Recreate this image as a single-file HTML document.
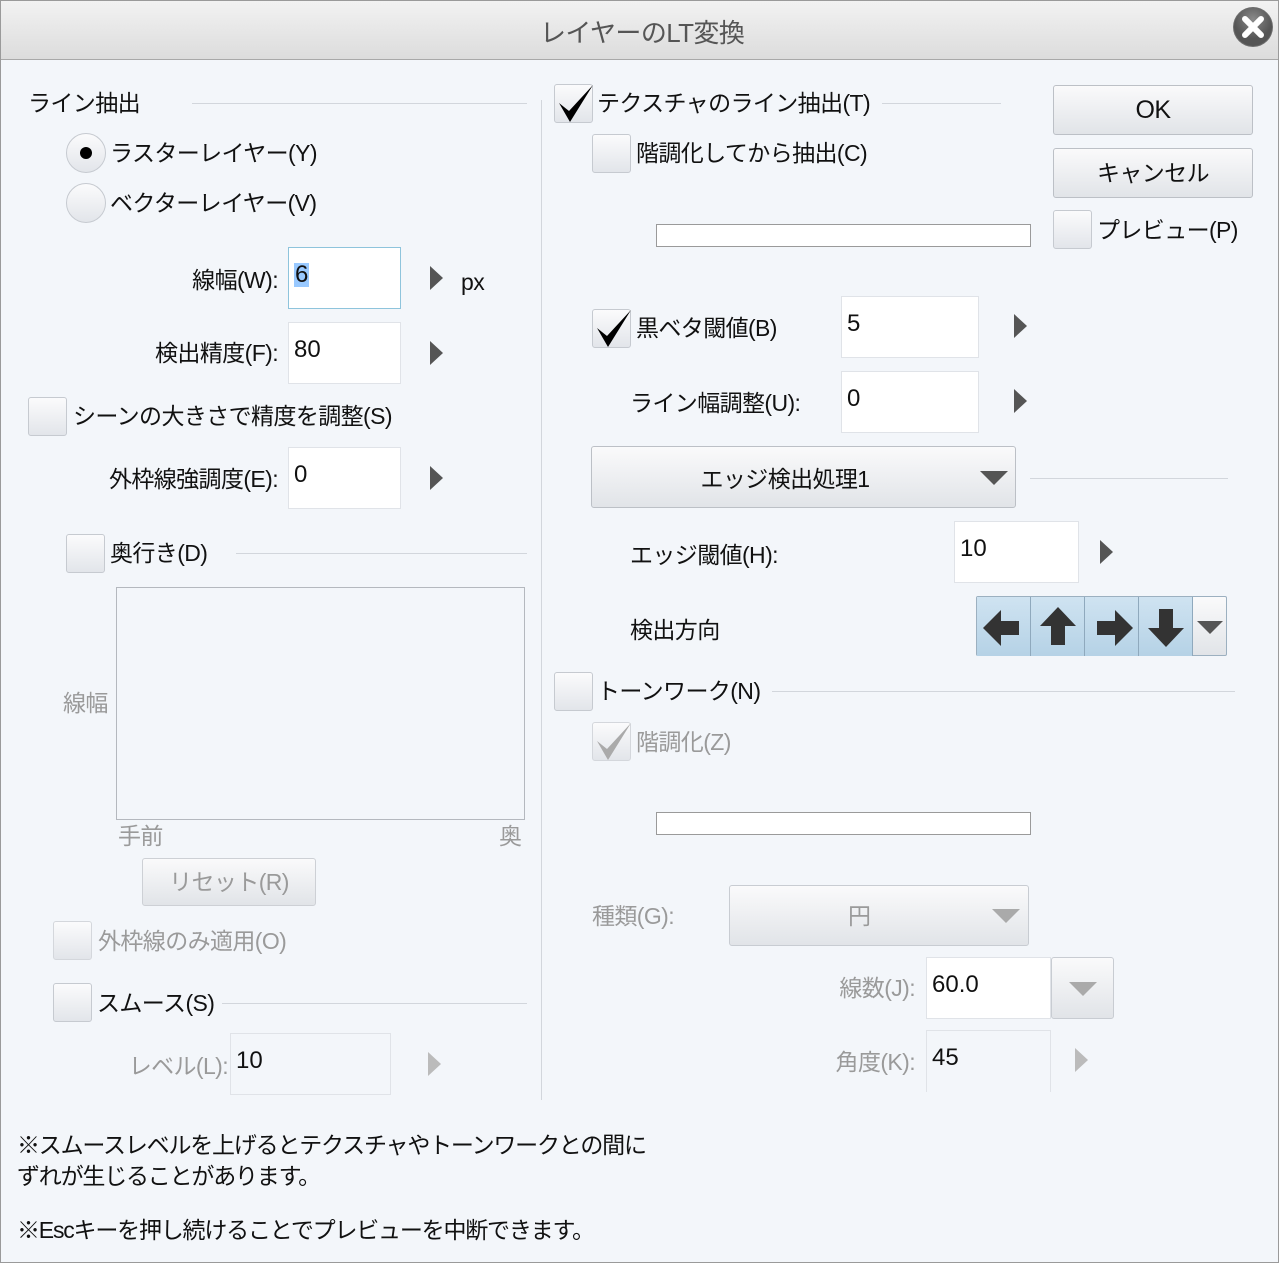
<!DOCTYPE html>
<html><head><meta charset="utf-8"><style>
*{margin:0;padding:0;box-sizing:border-box}
body{width:1279px;height:1263px;background:#f3f6fa;position:relative;overflow:hidden;font-family:"Liberation Sans","Noto Sans CJK JP",sans-serif;color:#111}
.win{position:absolute;left:0;top:0;width:1279px;height:1263px;border:1px solid #9a9a9a}
.title{position:absolute;left:1px;top:1px;width:1277px;height:59px;background:linear-gradient(#f2f2f2,#dcdcdc);border-bottom:1px solid #a8a8a8}
.t{position:absolute;font-size:23px;line-height:24px;height:24px;white-space:nowrap;letter-spacing:-0.6px}
.n{letter-spacing:-1.2px}
.r{text-align:right}
.g{color:#9a9a9a}
.line{position:absolute;height:1px;background:#d2d6dc}
.cb{position:absolute;width:39px;height:39px;border:1px solid #c6cad0;border-radius:3px;background:linear-gradient(#fbfbfc,#e2e5ea)}
.cb svg{position:absolute;left:1px;top:0}
.in{position:absolute;background:#fff;border:1px solid #e0e3e8}
.in span{position:absolute;left:5px;top:15px;font-size:24px;line-height:24px}
.arr{position:absolute;width:0;height:0;border-top:12px solid transparent;border-bottom:12px solid transparent;border-left:13px solid #555}
.arr.g2{border-left-color:#bbb}
.btn{position:absolute;border:1px solid #bcc0c6;border-radius:3px;background:linear-gradient(#fafafb,#e1e4e8);text-align:center}
.dn{position:absolute;width:0;height:0;border-left:14px solid transparent;border-right:14px solid transparent;border-top:14px solid #555}
.sl{position:absolute;height:23px;background:#fff;border:1px solid #9a9a9a}
.dir{position:absolute;top:0;width:54px;height:59px;background:linear-gradient(#cfe3f1,#b5d2e6);border-right:1px solid #8fa9bd}
</style></head><body>
<div class="win"></div>
<div class="title"></div>
<div class="t" style="left:540px;top:19px;font-size:26px;line-height:28px;height:28px;color:#555">レイヤーのLT変換</div>
<svg style="position:absolute;left:1232px;top:6px" width="42" height="42"><defs><radialGradient id="cg" cx="0.5" cy="0.3"><stop offset="0" stop-color="#8a8a8a"/><stop offset="1" stop-color="#555"/></radialGradient></defs><circle cx="21" cy="21" r="20" fill="#6b6b6b"/><circle cx="21" cy="21" r="19" fill="url(#cg)"/><path d="M13 13L29 29M29 13L13 29" stroke="#fff" stroke-width="6" stroke-linecap="round"/></svg>

<!-- LEFT -->
<div class="t" style="left:28px;top:91px">ライン抽出</div>
<div class="line" style="left:192px;top:103px;width:335px"></div>
<div style="position:absolute;left:541px;top:100px;width:1px;height:1000px;background:#d2d6dc"></div>

<div style="position:absolute;left:66px;top:133px;width:40px;height:40px;border-radius:50%;border:1px solid #c6cad0;background:linear-gradient(#fbfbfc,#e2e5ea)"><div style="position:absolute;left:13px;top:13px;width:12px;height:12px;border-radius:50%;background:#000"></div></div>
<div class="t" style="left:110px;top:141px">ラスターレイヤー(Y)</div>
<div style="position:absolute;left:66px;top:183px;width:40px;height:40px;border-radius:50%;border:1px solid #c6cad0;background:linear-gradient(#fbfbfc,#e2e5ea)"></div>
<div class="t" style="left:110px;top:191px">ベクターレイヤー(V)</div>

<div class="t r" style="left:80px;width:198px;top:268px">線幅(W):</div>
<div class="in" style="left:288px;top:247px;width:113px;height:62px;border-color:#8ec4dc"><span style="background:#99c9ff;padding:0 1px">6</span></div>
<div class="arr" style="left:430px;top:266px"></div>
<div class="t" style="left:461px;top:270px">px</div>

<div class="t r" style="left:40px;width:238px;top:341px">検出精度(F):</div>
<div class="in" style="left:288px;top:322px;width:113px;height:62px"><span>80</span></div>
<div class="arr" style="left:430px;top:341px"></div>

<div class="cb" style="left:28px;top:397px"></div>
<div class="t" style="left:73px;top:404px">シーンの大きさで精度を調整(S)</div>

<div class="t r" style="left:20px;width:258px;top:467px">外枠線強調度(E):</div>
<div class="in" style="left:288px;top:447px;width:113px;height:62px"><span>0</span></div>
<div class="arr" style="left:430px;top:466px"></div>

<div class="cb" style="left:66px;top:534px"></div>
<div class="t" style="left:110px;top:541px">奥行き(D)</div>
<div class="line" style="left:236px;top:553px;width:291px"></div>

<div style="position:absolute;left:116px;top:587px;width:409px;height:233px;border:1px solid #b4b8be"></div>
<div class="t g" style="left:63px;top:691px">線幅</div>
<div class="t g" style="left:118px;top:824px">手前</div>
<div class="t g" style="left:499px;top:824px">奥</div>
<div class="btn" style="left:142px;top:858px;width:174px;height:48px;border-color:#cdd0d5"><div class="t g" style="position:static;line-height:46px;height:46px">リセット(R)</div></div>

<div class="cb" style="left:53px;top:921px;border-color:#d4d7dc"></div>
<div class="t g" style="left:98px;top:929px">外枠線のみ適用(O)</div>
<div class="cb" style="left:53px;top:983px"></div>
<div class="t" style="left:97px;top:991px">スムース(S)</div>
<div class="line" style="left:222px;top:1003px;width:305px"></div>
<div class="t r g" style="left:80px;width:148px;top:1054px">レベル(L):</div>
<div class="in" style="left:230px;top:1033px;width:161px;height:62px;background:#f3f6fa"><span>10</span></div>
<div class="arr g2" style="left:428px;top:1052px"></div>

<div class="t n" style="left:17px;top:1133px">※スムースレベルを上げるとテクスチャやトーンワークとの間に</div>
<div class="t n" style="left:17px;top:1164px">ずれが生じることがあります。</div>
<div class="t n" style="left:17px;top:1218px">※Escキーを押し続けることでプレビューを中断できます。</div>

<!-- RIGHT -->
<div class="cb" style="left:554px;top:84px"><svg width="38" height="38"><path d="M3 18L14 37L37 0L13 26Z" fill="#000"/></svg></div>
<div class="t" style="left:597px;top:91px">テクスチャのライン抽出(T)</div>
<div class="line" style="left:882px;top:103px;width:119px"></div>
<div class="cb" style="left:592px;top:134px"></div>
<div class="t" style="left:636px;top:141px">階調化してから抽出(C)</div>
<div class="sl" style="left:656px;top:224px;width:375px"></div>

<div class="btn" style="left:1053px;top:85px;width:200px;height:50px"><div class="t" style="position:static;line-height:48px;height:48px;font-size:25px">OK</div></div>
<div class="btn" style="left:1053px;top:148px;width:200px;height:50px"><div class="t" style="position:static;line-height:48px;height:48px">キャンセル</div></div>
<div class="cb" style="left:1053px;top:210px"></div>
<div class="t" style="left:1097px;top:218px">プレビュー(P)</div>

<div class="cb" style="left:592px;top:309px"><svg width="38" height="38"><path d="M3 18L14 37L37 0L13 26Z" fill="#000"/></svg></div>
<div class="t" style="left:636px;top:316px">黒ベタ閾値(B)</div>
<div class="in" style="left:841px;top:296px;width:138px;height:62px"><span>5</span></div>
<div class="arr" style="left:1014px;top:314px"></div>

<div class="t" style="left:630px;top:391px">ライン幅調整(U):</div>
<div class="in" style="left:841px;top:371px;width:138px;height:62px"><span>0</span></div>
<div class="arr" style="left:1014px;top:389px"></div>

<div class="btn" style="left:591px;top:446px;width:425px;height:62px"><div class="t" style="left:0;width:386px;text-align:center;top:20px">エッジ検出処理1</div><div class="dn" style="left:388px;top:24px"></div></div>
<div class="line" style="left:1030px;top:478px;width:198px"></div>

<div class="t" style="left:630px;top:543px">エッジ閾値(H):</div>
<div class="in" style="left:954px;top:521px;width:125px;height:62px"><span>10</span></div>
<div class="arr" style="left:1100px;top:540px"></div>

<div class="t" style="left:630px;top:618px">検出方向</div>
<div style="position:absolute;left:976px;top:596px;width:251px;height:60px;border:1px solid #9cb0c0;border-radius:2px;background:linear-gradient(#fafafb,#e1e4e8)">
<div class="dir" style="left:0"><svg width="54" height="58"><path d="M6 31L24 13V24H42V38H24V49Z" fill="#333"/></svg></div>
<div class="dir" style="left:54px"><svg width="54" height="58"><path d="M27 10L45 29H34V48H20V29H9Z" fill="#333"/></svg></div>
<div class="dir" style="left:108px"><svg width="54" height="58"><path d="M48 31L30 13V24H12V38H30V49Z" fill="#333"/></svg></div>
<div class="dir" style="left:162px"><svg width="54" height="58"><path d="M27 50L45 31H34V12H20V31H9Z" fill="#333"/></svg></div>
<div class="dn" style="left:220px;top:24px;border-left-width:13px;border-right-width:13px;border-top-width:13px"></div>
</div>

<div class="cb" style="left:554px;top:672px"></div>
<div class="t" style="left:597px;top:679px">トーンワーク(N)</div>
<div class="line" style="left:772px;top:691px;width:463px"></div>

<div class="cb" style="left:592px;top:722px;border-color:#d4d7dc"><svg width="38" height="38"><path d="M3 18L14 37L37 0L13 26Z" fill="#aaa"/></svg></div>
<div class="t g" style="left:636px;top:730px">階調化(Z)</div>
<div class="sl" style="left:656px;top:812px;width:375px"></div>

<div class="t g" style="left:592px;top:904px">種類(G):</div>
<div class="btn" style="left:729px;top:885px;width:300px;height:61px;border-color:#c8ccd2"><div class="t g" style="left:118px;top:18px">円</div><div class="dn" style="left:262px;top:23px;border-top-color:#aaa"></div></div>

<div class="t r g" style="left:760px;width:155px;top:976px">線数(J):</div>
<div class="in" style="left:926px;top:957px;width:125px;height:62px"><span>60.0</span></div>
<div class="btn" style="left:1051px;top:957px;width:63px;height:62px;border-color:#c8ccd2"><div class="dn" style="left:17px;top:24px;border-top-color:#aaa"></div></div>

<div class="t r g" style="left:760px;width:155px;top:1050px">角度(K):</div>
<div class="in" style="left:926px;top:1030px;width:125px;height:62px;background:#f3f6fa;border-bottom:none"><span>45</span></div>
<div class="arr g2" style="left:1075px;top:1048px"></div>
</body></html>
